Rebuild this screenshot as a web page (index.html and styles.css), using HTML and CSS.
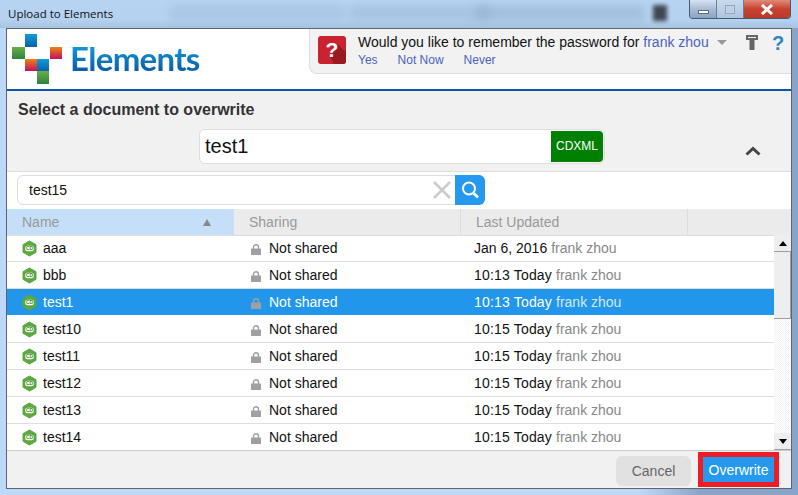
FILE: index.html
```html
<!DOCTYPE html>
<html lang="en">
<head>
  <meta charset="UTF-8" />
  <title>Upload to Elements</title>
  <link rel="stylesheet" href="styles.css">
</head>
<body>
  <div class="window">
    <div class="titlebar">
      <span class="blurs">
        <i class="blur b1"></i><i class="blur b2"></i><i class="blur b3"></i><i class="blur b4"></i>
      </span>
      <span class="title">Upload to Elements</span>
      <div class="controls">
        <span class="ctl ctl-min"><i></i></span>
        <span class="ctl ctl-max"><i></i></span>
        <span class="ctl ctl-close">
          <svg width="14" height="11" viewBox="0 0 14 11"><path d="M2 1 L12 10 M12 1 L2 10" stroke="#fff" stroke-width="3"/></svg>
        </span>
      </div>
    </div>

    <div class="client">
      <div class="header">
        <div class="brand">
          <svg class="logo" width="52" height="52" viewBox="0 0 52 52">
            <defs>
              <linearGradient id="gBlue" x1="0" y1="0" x2="0" y2="1"><stop offset="0" stop-color="#0f9bdc"/><stop offset="1" stop-color="#0a62a8"/></linearGradient>
              <linearGradient id="gGreen" x1="0" y1="0" x2="0" y2="1"><stop offset="0" stop-color="#6cae45"/><stop offset="1" stop-color="#2c8440"/></linearGradient>
              <linearGradient id="gWarm" x1="0" y1="0" x2="0" y2="1"><stop offset="0" stop-color="#ee8313"/><stop offset="1" stop-color="#c3115f"/></linearGradient>
            </defs>
            <rect x="13" y="0" width="12" height="13" fill="url(#gBlue)"/>
            <rect x="0" y="13" width="13" height="12" fill="url(#gGreen)"/>
            <rect x="38" y="13" width="12" height="12" fill="url(#gWarm)"/>
            <rect x="13" y="25" width="12" height="12" fill="url(#gWarm)"/>
            <rect x="25" y="25" width="12" height="12" fill="url(#gBlue)"/>
            <rect x="25" y="37" width="12" height="13" fill="url(#gGreen)"/>
          </svg>
          <span class="wordmark">Elements</span>
        </div>
        <div class="prompt">
          <svg class="prompt-icon" width="28" height="28" viewBox="0 0 28 28">
            <rect width="28" height="28" rx="3" fill="#c8232f"/>
            <path d="M13 22 L19 8 L28 16 V25 a3 3 0 0 1 -3 3 H16 Z" fill="#9a1a22"/>
            <text x="14" y="21" text-anchor="middle" class="prompt-q">?</text>
          </svg>
          <div class="prompt-text">
            <div class="prompt-line">Would you like to remember the password for <a class="link">frank zhou</a><i class="caret"></i></div>
            <div class="prompt-actions"><a class="link">Yes</a><a class="link">Not Now</a><a class="link">Never</a></div>
          </div>
          <svg class="key" width="12" height="15" viewBox="0 0 12 15"><path d="M0 0 H12 V5 H8.5 V15 H3.5 V5 H0 Z M2 2 V3 H10 V2 Z" fill="#666" fill-rule="evenodd"/></svg>
          <span class="help">?</span>
        </div>
      </div>

      <div class="panel">
        <h1>Select a document to overwrite</h1>
        <div class="name-row">
          <div class="name-input">
            <span class="name-value">test1</span>
            <span class="type">CDXML</span>
          </div>
          <svg class="collapse" width="16" height="10" viewBox="0 0 16 10"><path d="M1.5 8.5 L8 2.5 L14.5 8.5" fill="none" stroke="#444" stroke-width="3"/></svg>
        </div>
      </div>

      <div class="search-row">
        <div class="search">
          <span class="search-value">test15</span>
          <svg class="clear" width="18" height="18" viewBox="0 0 18 18"><path d="M1 1 L17 17 M17 1 L1 17" stroke="#ccc" stroke-width="2.6"/></svg>
          <span class="search-btn">
            <svg width="20" height="20" viewBox="0 0 20 20"><circle cx="9" cy="8.5" r="6" fill="none" stroke="#fff" stroke-width="2"/><path d="M13.5 13 L18 17.5" stroke="#fff" stroke-width="2.6"/></svg>
          </span>
        </div>
      </div>

      <div class="thead">
        <div class="th th-active">Name<i class="sort"></i></div>
        <div class="th">Sharing</div>
        <div class="th">Last Updated</div>
        <div class="th th-end"></div>
      </div>

      <div class="list">
        <div class="rows" id="rows"></div>
        <div class="scrollbar">
          <span class="sb-btn"><i class="sb-up"></i></span>
          <span class="sb-thumb"></span>
          <span class="sb-track"></span>
          <span class="sb-btn"><i class="sb-down"></i></span>
        </div>
      </div>

      <div class="footer">
        <button class="btn btn-cancel">Cancel</button>
        <button class="btn btn-primary">Overwrite</button>
      </div>
    </div>
  </div>

  <script>
    const docs = [
      ["aaa", "Jan 6, 2016"], ["bbb", "10:13 Today"], ["test1", "10:13 Today"], ["test10", "10:15 Today"],
      ["test11", "10:15 Today"], ["test12", "10:15 Today"], ["test13", "10:15 Today"], ["test14", "10:15 Today"]
    ];
    const hex = '<svg class="hex" width="15" height="17" viewBox="0 0 15 17"><path d="M7.5 1 L14 4.7 V12.3 L7.5 16 L1 12.3 V4.7 Z" fill="#5aa83e" stroke="#5aa83e" stroke-linejoin="round"/><rect x="3.2" y="5.8" width="8.6" height="5.4" rx="2.2" fill="#fff"/><text x="7.5" y="10.3" text-anchor="middle" class="hex-text">CD</text></svg>';
    const lock = '<svg class="lock" width="10" height="11" viewBox="0 0 10 11"><path d="M2.5 5 V3.2 a2.5 2.5 0 0 1 5 0 V5" fill="none" stroke="#a0a0a4" stroke-width="1.4"/><rect y="4.5" width="10" height="6.5" rx="0.5" fill="#a0a0a4"/></svg>';
    const rows = document.getElementById("rows");
    docs.forEach(function (d) {
      const row = document.createElement("div");
      row.className = d[0] === "test1" ? "row selected" : "row";
      const when = d[1].indexOf("Today") > -1 ? "when today" : "when";
      row.innerHTML = '<div class="cell cell-name">' + hex + d[0] + '</div>' +
        '<div class="cell cell-share">' + lock + 'Not shared</div>' +
        '<div class="cell cell-date"><span class="' + when + '">' + d[1] + '</span><span class="owner">frank zhou</span></div>';
      rows.appendChild(row);
    });
  </script>
</body>
</html>
```

FILE: styles.css
```css
* {
  box-sizing: border-box;
}

html,
body {
  margin: 0;
  height: 100%;
  overflow: hidden;
}

body {
  font-family: "Liberation Sans", Arial, sans-serif;
  font-size: 14px;
  color: #111;
  background: #b9d6f2;
}

.window {
  height: 495px;
  display: flex;
  flex-direction: column;
  padding: 0 6px 6px;
  background: linear-gradient(to right, #bcdaf7 0, #bcdaf7 640px, #88a5c9 700px);
}

/* title bar */
.titlebar {
  position: relative;
  height: 28px;
  flex: none;
  margin: 0 -6px;
  padding: 5px 8px 0;
  background: linear-gradient(to bottom, #b7d5f3, #b4d2f0 70%, #a6c3df);
}

.title {
  position: relative;
  font-family: "Open Sans", sans-serif;
  font-size: 11.5px;
  line-height: 16px;
  color: #111;
}

.blurs {
  position: absolute;
  inset: 0;
  overflow: hidden;
}

.blur {
  position: absolute;
  top: 5px;
  height: 16px;
  background: #8ea9c7;
  filter: blur(4px);
  opacity: 0.55;
}

.b1 { left: 170px; width: 175px; background: #a0bddb; }
.b2 { left: 350px; width: 140px; opacity: 0.35; }
.b3 { left: 475px; width: 170px; opacity: 0.45; }
.b4 { left: 653px; width: 14px; background: #3a3f48; opacity: 0.95; filter: blur(2px); }

.controls {
  position: absolute;
  top: 0;
  right: 7px;
  display: flex;
  height: 19px;
  border: 1px solid #4a5a6e;
  border-top: none;
  border-radius: 0 0 4px 4px;
  overflow: hidden;
}

.ctl {
  display: flex;
  align-items: center;
  justify-content: center;
  height: 100%;
}

.ctl-min {
  width: 27px;
  background: linear-gradient(to bottom, #d5e3f2, #a9bdd4 50%, #8ba4c0);
  border-right: 1px solid #6e8096;
}

.ctl-min i {
  width: 11px;
  height: 4px;
  margin-top: 5px;
  background: #fff;
  border: 1px solid #5a6a80;
}

.ctl-max {
  width: 27px;
  background: linear-gradient(to bottom, #c9dced, #adc5de);
  border-right: 1px solid #6e8096;
}

.ctl-max i {
  width: 10px;
  height: 9px;
  border: 1px solid #8fa3ba;
  box-shadow: inset 0 0 0 1px #c6d6e6;
}

.ctl-close {
  width: 46px;
  background: linear-gradient(to bottom, #e08a78, #c8412e 50%, #b93a2c);
}

/* client area */
.client {
  flex: 1;
  min-height: 0;
  display: flex;
  flex-direction: column;
  background: #fff;
  border: 1px solid #5b6672;
}

.header {
  height: 62px;
  flex: none;
  display: flex;
  justify-content: space-between;
  align-items: flex-start;
  background: #fff;
  border-bottom: 2px solid #0f57a5;
}

.brand {
  display: flex;
  align-items: flex-start;
  padding: 5px 0 0 5px;
}

.logo {
  flex: none;
}

.wordmark {
  margin: 2px 0 0 6px;
  font-family: Lato, sans-serif;
  font-size: 33px;
  font-weight: 700;
  line-height: 44px;
  letter-spacing: -0.7px;
  background: linear-gradient(to bottom, #12a0de 15%, #0a5ea8 80%);
  -webkit-background-clip: text;
  background-clip: text;
  color: transparent;
}

.prompt {
  width: 482px;
  height: 45px;
  display: flex;
  align-items: flex-start;
  padding: 6px 0 0 8px;
  background: #f2f2f2;
  border: 1px solid #ddd;
  border-width: 0 0 1px 1px;
  border-radius: 0 0 0 8px;
}

.prompt-icon {
  flex: none;
  margin-top: 1px;
}

.prompt-q {
  font-family: "Liberation Sans", sans-serif;
  font-size: 21px;
  font-weight: bold;
  fill: #fff;
}

.prompt-text {
  margin: -1px 0 0 12px;
  width: 376px;
}

.prompt-line {
  line-height: 17px;
}

.link {
  color: #4a62bd;
}

.caret {
  display: inline-block;
  margin-left: 8px;
  border-left: 5px solid transparent;
  border-right: 5px solid transparent;
  border-top: 5px solid #999;
  vertical-align: 2px;
}

.prompt-actions {
  display: flex;
  gap: 20px;
  margin-top: 1px;
  font-size: 12px;
  line-height: 16px;
}

.key {
  flex: none;
  margin-left: 12px;
}

.help {
  margin: -2px 0 0 14px;
  font-size: 20px;
  font-weight: bold;
  line-height: 20px;
  color: #2e86c8;
}

/* name panel */
.panel {
  height: 81px;
  flex: none;
  background: #f1f1f1;
  border-bottom: 1px solid #ddd;
  padding: 10px 10px 0 11px;
}

h1 {
  margin: 0;
  font-size: 16px;
  line-height: 18px;
  color: #333;
}

.name-row {
  position: relative;
  display: flex;
  margin-top: 10px;
}

.name-input {
  width: 406px;
  height: 35px;
  margin-left: 181px;
  display: flex;
  justify-content: space-between;
  background: #fff;
  border: 1px solid #ddd;
  border-radius: 6px;
  padding: 1px 1px 1px 5px;
}

.name-value {
  font-size: 20px;
  line-height: 31px;
}

.type {
  width: 52px;
  background: #008000;
  color: #fff;
  font-size: 12px;
  line-height: 31px;
  text-align: center;
  border-radius: 0 4px 4px 0;
}

.collapse {
  position: absolute;
  right: 20px;
  top: 17px;
}

.search-row {
  height: 37px;
  flex: none;
  padding: 3px 0 0 10px;
  background: #fff;
}

.search {
  width: 468px;
  height: 30px;
  display: flex;
  align-items: center;
  border: 1px solid #ddd;
  border-radius: 6px;
  padding-left: 11px;
}

.search-value {
  flex: 1;
}

.clear {
  margin-right: 4px;
}

.search-btn {
  width: 30px;
  height: 30px;
  margin: 0 -1px 0 0;
  display: flex;
  align-items: center;
  justify-content: center;
  background: #2499ee;
  border-radius: 0 6px 6px 0;
}

/* table */
.thead {
  height: 27px;
  flex: none;
  display: grid;
  grid-template-columns: 227px 227px 227px 1fr;
  background: #ebebeb;
  border-bottom: 1px solid #ddd;
  color: #999;
}

.th {
  display: flex;
  align-items: center;
  justify-content: space-between;
  padding-left: 15px;
  border-right: 1px solid #ddd;
  line-height: 26px;
}

.th-active {
  background: #c5dff8;
  padding-right: 23px;
  border-right: none;
}

.th-end {
  border-right: none;
}

.sort {
  border-left: 4.5px solid transparent;
  border-right: 4.5px solid transparent;
  border-bottom: 7px solid #888;
}

.list {
  flex: 1;
  min-height: 0;
  margin-top: -1px;
  display: flex;
  overflow: hidden;
}

.rows {
  flex: 1;
  min-width: 0;
}

.row {
  height: 27px;
  display: grid;
  grid-template-columns: 227px 227px 1fr;
  align-items: center;
  border-bottom: 1px solid #ddd;
}

.row.selected {
  background: #2196ea;
  background-clip: padding-box;
  border-bottom-color: #fff;
  color: #fff;
}

.cell {
  display: flex;
  align-items: center;
  white-space: pre;
}

.cell-name {
  padding-left: 15px;
}

.cell-share {
  padding-left: 17px;
}

.cell-date {
  padding-left: 13px;
}

.today {
  letter-spacing: 0.18px;
}

.hex {
  margin-right: 6px;
  flex: none;
}

.hex-text {
  font-size: 5px;
  font-weight: bold;
  fill: #3f8a28;
}

.lock {
  margin: 2px 8px 0 0;
  flex: none;
}

.owner {
  margin-left: 4px;
  color: #888;
}

.selected .owner {
  color: #d4e8fa;
}

.scrollbar {
  width: 17px;
  flex: none;
  display: flex;
  flex-direction: column;
  background: #fff;
}

.sb-btn {
  height: 17px;
  flex: none;
  display: flex;
  align-items: center;
  justify-content: center;
  background: #eee;
  border-bottom: 1px solid #a0a0a0;
}

.sb-up {
  border-left: 4px solid transparent;
  border-right: 4px solid transparent;
  border-bottom: 5px solid #000;
}

.sb-down {
  border-left: 4px solid transparent;
  border-right: 4px solid transparent;
  border-top: 5px solid #000;
}

.sb-thumb {
  height: 67px;
  flex: none;
  background: #eee;
  border-bottom: 1px solid #a0a0a0;
  border-right: 1px solid #a0a0a0;
}

.sb-track {
  flex: 1;
  background: repeating-conic-gradient(#f0f0f0 0 25%, #fff 0 50%) 0 0 / 2px 2px;
}

/* footer */
.footer {
  height: 38px;
  flex: none;
  display: flex;
  justify-content: flex-end;
  align-items: flex-start;
  gap: 7px;
  padding: 1px 12px 0 0;
  background: #f1f1f1;
  border-top: 1px solid #ccc;
}

.btn {
  font-family: inherit;
  font-size: 14px;
  border: none;
  padding: 0;
}

.btn-cancel {
  width: 75px;
  height: 30px;
  margin-top: 4px;
  background: #e1e1e1;
  color: #666;
  border-radius: 6px;
}

.btn-primary {
  width: 81px;
  height: 35px;
  background: #2499ee;
  color: #fff;
  border: 5px solid #ee1c25;
}
```
